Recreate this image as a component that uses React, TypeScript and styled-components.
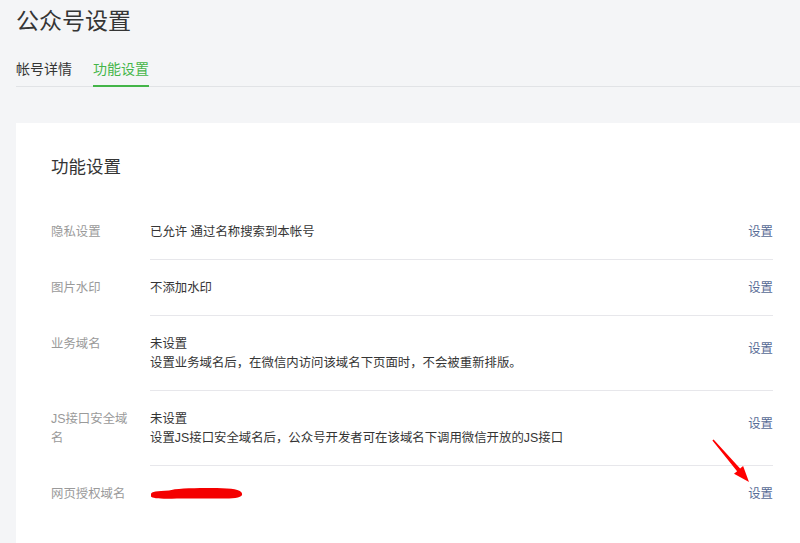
import styled, { createGlobalStyle } from "styled-components";

const GlobalStyle = createGlobalStyle`
  html, body {
    margin: 0;
    padding: 0;
    background: #f4f5f7;
    font-family: "Liberation Sans", "Noto Sans CJK SC", sans-serif;
    color: #353535;
  }
`;

const Page = styled.div`
  padding-left: 16px;
  overflow: hidden;
`;

const Title = styled.h1`
  margin: 4px 0 0;
  font-size: 23px;
  line-height: 34px;
  font-weight: 400;
  color: #353535;
`;

const TabBar = styled.div`
  display: flex;
  gap: 21px;
  margin-top: 21px;
  border-bottom: 1px solid #e1e3e6;
`;

const Tab = styled.div<{ $active?: boolean }>`
  font-size: 14px;
  line-height: 20px;
  padding-bottom: 6px;
  margin-bottom: -1px;
  border-bottom: 2px solid ${(p) => (p.$active ? "#44b549" : "transparent")};
  color: ${(p) => (p.$active ? "#44b549" : "#353535")};
`;

const Card = styled.div`
  position: relative;
  margin-top: 36px;
  background: #fff;
  padding: 31px 27px 40px 35px;
`;

const CardTitle = styled.h2`
  margin: 0 0 24px;
  font-size: 17.5px;
  line-height: 26px;
  font-weight: 400;
  color: #353535;
`;

const Row = styled.div`
  display: flex;
  font-size: 12.4px;
  line-height: 19px;
`;

const Label = styled.div`
  width: 80px;
  flex: none;
  padding: 19px 19px 0 0;
  color: #9a9a9a;
`;

const Body = styled.div<{ $last?: boolean }>`
  flex: 1;
  display: flex;
  align-items: center;
  padding: 19px 0 17px;
  border-bottom: ${(p) => (p.$last ? "none" : "1px solid #e7e7eb")};
`;

const Value = styled.div`
  flex: 1;
  color: #353535;
`;

const Action = styled.a<{ $multi?: boolean }>`
  color: #576b95;
  text-decoration: none;
  margin-bottom: ${(p) => (p.$multi ? "9px" : "0")};
`;

const Scribble = styled.svg`
  display: block;
  margin-left: -3px;
  height: 19px;
`;

const Arrow = styled.svg`
  position: absolute;
  left: 684px;
  top: 307px;
  width: 60px;
  height: 60px;
`;

type Item = {
  label: string;
  value: React.ReactNode;
  multi?: boolean;
};

const items: Item[] = [
  { label: "隐私设置", value: "已允许 通过名称搜索到本帐号" },
  { label: "图片水印", value: "不添加水印" },
  {
    label: "业务域名",
    value: (
      <>
        未设置
        <br />
        设置业务域名后，在微信内访问该域名下页面时，不会被重新排版。
      </>
    ),
    multi: true,
  },
  {
    label: "JS接口安全域名",
    value: (
      <>
        未设置
        <br />
        设置JS接口安全域名后，公众号开发者可在该域名下调用微信开放的JS接口
      </>
    ),
    multi: true,
  },
  {
    label: "网页授权域名",
    value: (
      <Scribble width="98" viewBox="0 0 98 19">
        <path
          d="M4 9 C4 6.5 10 6 22 5.5 C30 3 60 2.5 80 3.5 C92 4 96 7 95 10 C94 13 85 13.5 75 13.5 L30 13.5 C15 14 5 13.5 4 11.5 Z"
          fill="#f40000"
        />
      </Scribble>
    ),
  },
];

export default function App() {
  return (
    <>
      <GlobalStyle />
      <Page>
        <Title>公众号设置</Title>
        <TabBar>
          <Tab>帐号详情</Tab>
          <Tab $active>功能设置</Tab>
        </TabBar>
        <Card>
          <CardTitle>功能设置</CardTitle>
          {items.map((item, i) => (
            <Row key={item.label}>
              <Label>{item.label}</Label>
              <Body $last={i === items.length - 1}>
                <Value>{item.value}</Value>
                <Action href="#" $multi={item.multi}>
                  设置
                </Action>
              </Body>
            </Row>
          ))}
          <Arrow viewBox="0 0 60 60">
            <polygon
              points="13.6,9.5 40.1,38.6 43.1,36 49,52 34,43.8 37.1,41.2 12.4,10.5"
              fill="#f00"
            />
          </Arrow>
        </Card>
      </Page>
    </>
  );
}
